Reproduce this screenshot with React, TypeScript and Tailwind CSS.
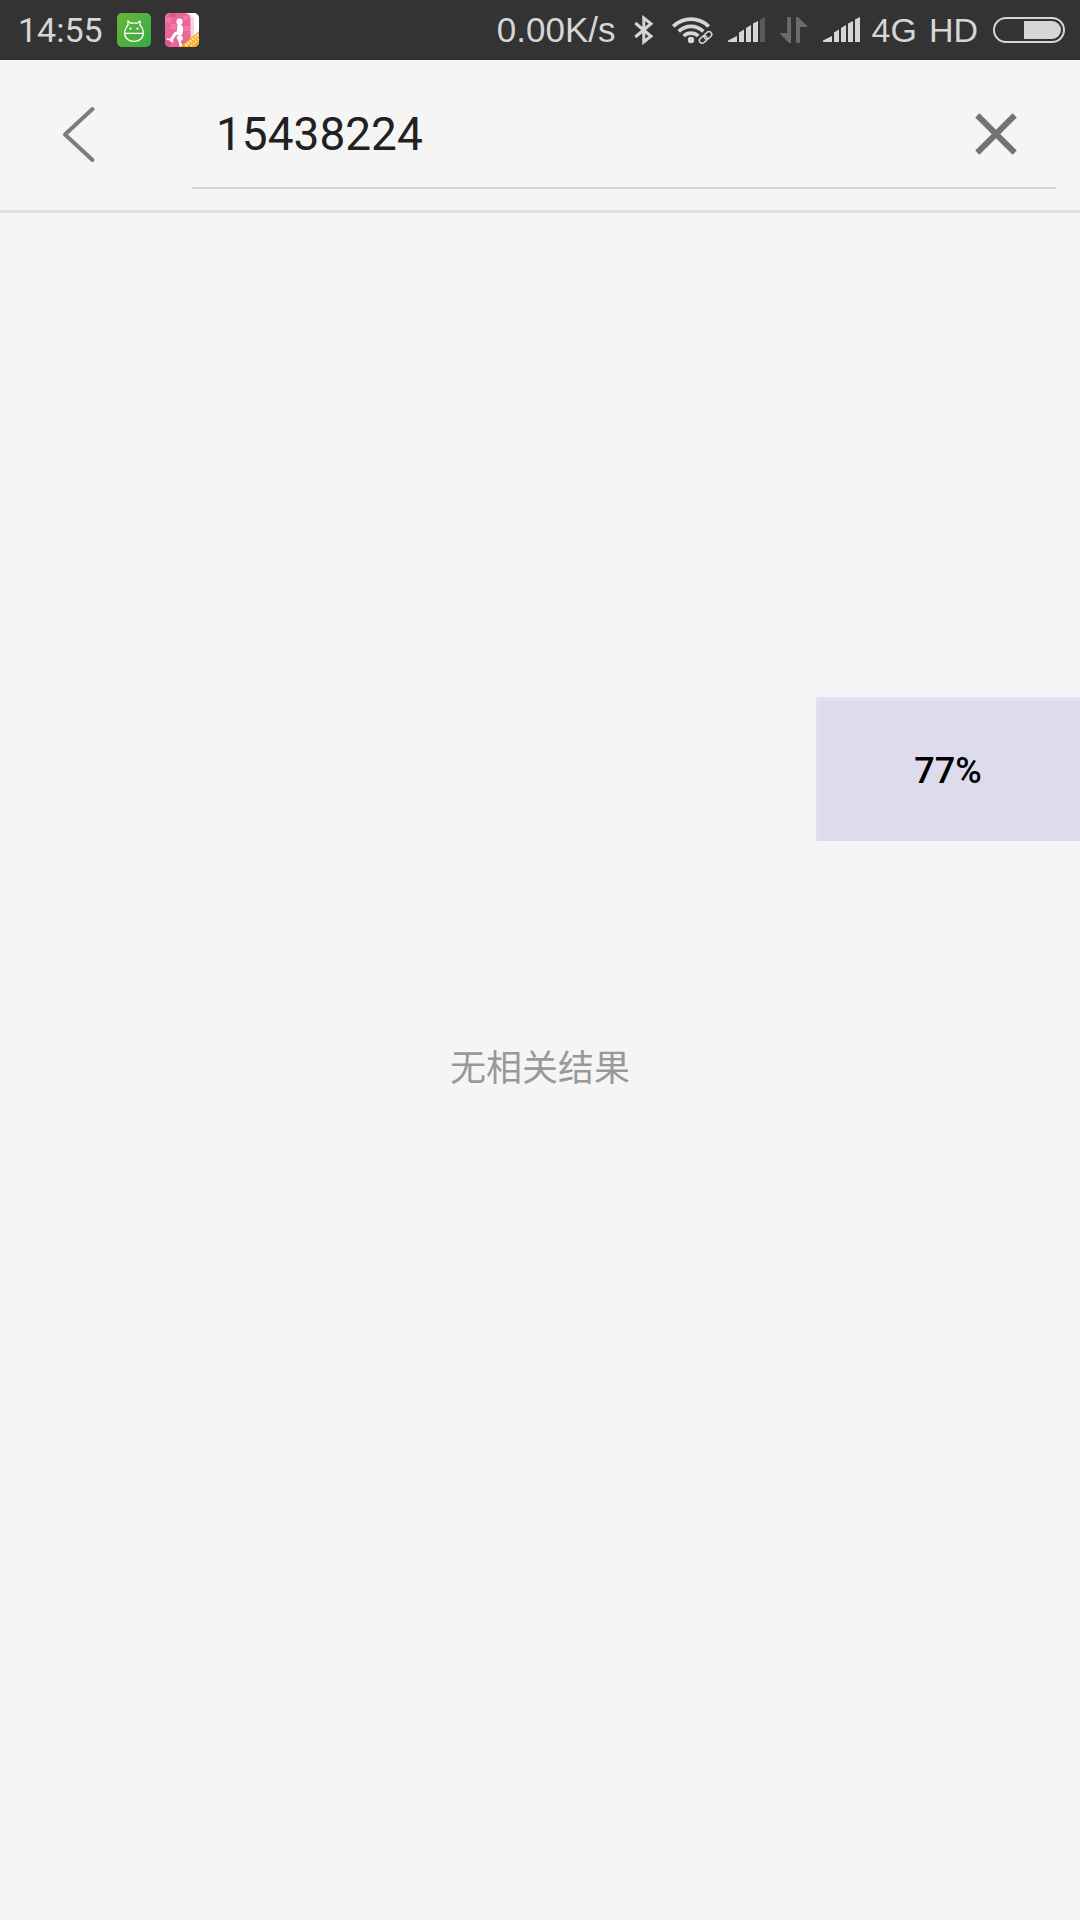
function CatAppIcon() {
  return (
    <svg viewBox="0 0 34 34" className="h-[34px] w-[34px]" aria-hidden="true">
      <defs>
        <linearGradient id="catGreen" x1="0" y1="0" x2="1" y2="1">
          <stop offset="0" stopColor="#68b53a" />
          <stop offset="1" stopColor="#36ab42" />
        </linearGradient>
      </defs>
      <rect width="34" height="34" rx="5" fill="url(#catGreen)" />
      <g fill="none" stroke="#fff" strokeWidth="1.3" strokeLinejoin="round">
        <path d="M9.500 14 11 12V8l3 2.300q3-.8 6 0L23 8v4l1.500 2q2 3 1.800 6.300" />
        <path d="M9.500 14q-2 3-1.800 6.300h18.600c0 5-4.300 8-9.300 8s-9.300-3-9.300-8" />
      </g>
      <circle cx="13.500" cy="15.700" r="1.100" fill="#fff" />
      <circle cx="20.500" cy="15.700" r="1.100" fill="#fff" />
    </svg>
  );
}

function ReaderAppIcon() {
  return (
    <svg viewBox="0 0 34 34" className="h-[34px] w-[34px]" aria-hidden="true">
      <defs>
        <clipPath id="readerClip">
          <rect width="34" height="34" rx="5" />
        </clipPath>
      </defs>
      <g clipPath="url(#readerClip)">
        <rect width="34" height="34" fill="#fff" />
        <path d="M22 0q7 1 7 8v26h-6V1Z" fill="#f5d5e2" />
        <path d="M0 0h20q5.500 1 5.500 7v27H0Z" fill="#ec6598" />
        <path d="M0 5h6v5H0ZM6 11h5v5H6ZM19 13h6v5h-6ZM18 3h5v4h-5Z" fill="#f07ba8" />
        <path d="M5 0h6v4H5ZM0 27h5v7H0Z" fill="#e2558c" />
        <circle cx="14.500" cy="8.700" r="3.100" fill="#fff" />
        <path
          d="M12.300 11.500q4-1.200 5.300 1.800c1 2.700.7 5.400-.4 8.200q-1 1-3 .9l-3-.3-3.400 5.400 1 1.700-1.500.3-3.300-2.300-2.200-.2.200-1.500 3 .3 3.500-5.400q1-2 3.300-2Z"
          fill="#fff"
        />
        <path d="M11.500 24.500c.8-2.800 5.800-3.300 6.300.3.200 2-1 3-2.300 3.500l3 5.700h-4l-.5-4.500Z" fill="#fff" />
        <path d="M15 34 34 18v16Z" fill="#f9a81c" />
        <path d="M20.500 32.500 33.500 21.500" stroke="#ffe9bd" strokeWidth="3" strokeDasharray="1.700 1.300" />
        <path d="M26 33 34 26" stroke="#ffe9bd" strokeWidth="2" strokeDasharray="1.500 1.500" />
      </g>
    </svg>
  );
}

function BluetoothIcon() {
  return (
    <svg viewBox="0 0 20 30" className="h-[30px] w-5" fill="none" stroke="#d6d6d6" strokeWidth="3" aria-label="Bluetooth">
      <path d="M1.300 8 17 21.300 9.800 27V3L17 8.700 1.300 22" />
    </svg>
  );
}

function WifiIcon() {
  return (
    <svg viewBox="0 0 42 28" className="h-7 w-[42px]" fill="none" stroke="#d6d6d6" aria-label="Wi-Fi">
      <g strokeWidth="3.800">
        <path d="M1.300 10.500a25 25 0 0 1 35.400 0" />
        <path d="M6.700 15.400a17.500 17.500 0 0 1 24.600 0" />
        <path d="M11.700 20a10.500 10.500 0 0 1 14.600 0" />
      </g>
      <circle cx="19" cy="24" r="3.200" fill="#d6d6d6" stroke="none" />
      <circle cx="33.500" cy="21.500" r="5.500" fill="#333" stroke="none" />
      <g strokeWidth="1.500" transform="rotate(-42 33.500 21.500)">
        <rect x="26.300" y="18.700" width="8.400" height="5.600" rx="2.800" />
        <rect x="32.500" y="18.700" width="8.400" height="5.600" rx="2.800" />
      </g>
    </svg>
  );
}

function SignalIcon({ last }: { last: string }) {
  return (
    <svg viewBox="0 0 37 26" className="h-[26px] w-[37px]" fill="#d6d6d6" aria-label="Signal">
      <path d="M0 25v-1.500L9 19v6ZM11 25v-9.500L16 12.500V25ZM18 25V11L23 8v17ZM25 25V6.500L30 4v21Z" />
      <path d="M32 25V2.500L37 0v25Z" fill={last} />
    </svg>
  );
}

function TransferIcon() {
  return (
    <svg viewBox="0 0 28 26" className="h-[26px] w-7" fill="#6b6b6b" aria-label="Data transfer">
      <path d="M7.200 1q0-1 1-1H10q1 0 1 1v25H9L0 16.800V16h7.200ZM16 0h2l9.300 9.200v.8H20v15q0 1-1 1h-2q-1 0-1-1Z" />
    </svg>
  );
}

function BatteryIcon() {
  return (
    <svg viewBox="0 0 72 26" className="h-[26px] w-[72px]" aria-label="Battery">
      <rect x="1" y="1" width="70" height="24" rx="12" fill="none" stroke="#d6d6d6" strokeWidth="2" />
      <path d="M31 4h28a9 9 0 0 1 0 18H31Z" fill="#d6d6d6" />
    </svg>
  );
}

function StatusBar() {
  return (
    <div className="flex h-[60px] items-center justify-between bg-[#333] pr-[15px] pl-[18px] text-[34px] leading-[62px] text-[#d6d6d6]">
      <div className="flex items-center">
        <span className="font-[Roboto,sans-serif]">14:55</span>
        <span className="ml-[14px] flex gap-[14px]">
          <CatAppIcon />
          <ReaderAppIcon />
        </span>
      </div>
      <div className="flex items-center font-['Liberation_Sans',sans-serif]">
        <span className="text-[35px]">0.00K/s</span>
        <span className="ml-[18px] flex">
          <BluetoothIcon />
        </span>
        <span className="ml-[18px] flex">
          <WifiIcon />
        </span>
        <span className="ml-[14px] flex">
          <SignalIcon last="#5a5a5a" />
        </span>
        <span className="ml-[15px] flex">
          <TransferIcon />
        </span>
        <span className="ml-[15px] flex">
          <SignalIcon last="#d6d6d6" />
        </span>
        <span className="ml-3">4G</span>
        <span className="ml-3">HD</span>
        <span className="ml-[15px] flex">
          <BatteryIcon />
        </span>
      </div>
    </div>
  );
}

function SearchHeader() {
  return (
    <header className="flex h-[153px] items-start border-b-[3px] border-[#ddd] pr-6">
      <button type="button" aria-label="返回" className="flex h-[148px] w-48 shrink-0 items-center pl-[62px]">
        <svg viewBox="0 0 34 58" className="h-[58px] w-[34px]" fill="none" stroke="#7c7c7c" strokeWidth="4" strokeLinecap="round" strokeLinejoin="round">
          <path d="M30.500 4 3 29.500 30.500 55" />
        </svg>
      </button>
      <div className="flex h-[129px] min-w-0 flex-1 items-center border-b-2 border-[#d5d5d5] pt-5 pr-[38px] pl-6">
        <input
          type="text"
          aria-label="搜索"
          defaultValue="15438224"
          className="h-16 min-w-0 flex-1 bg-transparent font-[Roboto,sans-serif] text-[46px] leading-[64px] text-[#212121] outline-none"
        />
        <button type="button" aria-label="清除" className="flex">
          <svg viewBox="0 0 44 44" className="h-11 w-11" fill="none" stroke="#737373" strokeWidth="6">
            <path d="M3.300 3.300 40.700 40.700M40.700 3.300 3.300 40.700" />
          </svg>
        </button>
      </div>
    </header>
  );
}

export default function App() {
  return (
    <div className="relative flex min-h-screen flex-col bg-[#f5f5f5]">
      <StatusBar />
      <SearchHeader />
      <main className="flex flex-1 items-center justify-center pb-1">
        <p className="font-['Noto_Sans_CJK_SC',sans-serif] text-[36px] leading-[54px] text-[#999]">无相关结果</p>
      </main>
      <div className="absolute top-[697px] right-0 flex h-36 w-[264px] items-center justify-center bg-[#dedbed] pt-1 font-[Roboto,sans-serif] text-[36px] font-medium text-black shadow-[inset_3px_3px_3px_#e3e0f5]">
        77%
      </div>
    </div>
  );
}
